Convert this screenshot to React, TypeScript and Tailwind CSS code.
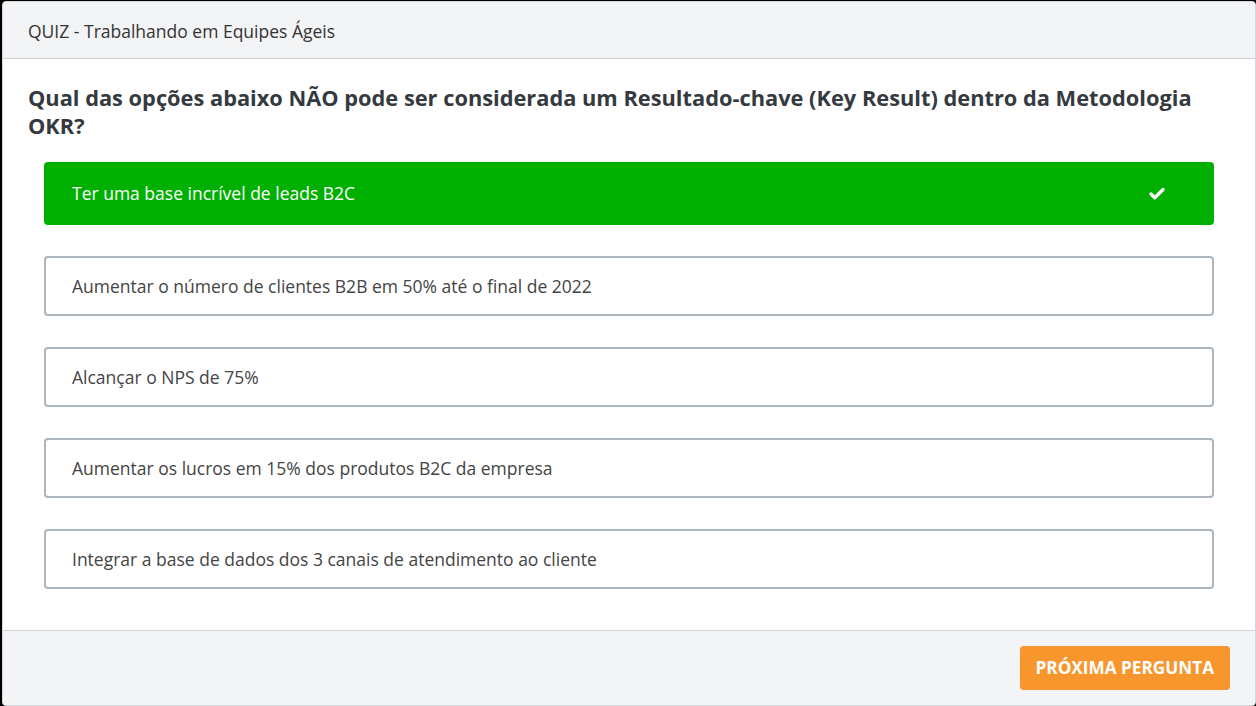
import { Check } from "lucide-react";

const options = [
  { id: 1, text: "Ter uma base incrível de leads B2C", correct: true },
  { id: 2, text: "Aumentar o número de clientes B2B em 50% até o final de 2022", correct: false },
  { id: 3, text: "Alcançar o NPS de 75%", correct: false },
  { id: 4, text: "Aumentar os lucros em 15% dos produtos B2C da empresa", correct: false },
  { id: 5, text: "Integrar a base de dados dos 3 canais de atendimento ao cliente", correct: false },
];

export default function App() {
  return (
    <div className="h-[706px] w-[1256px] bg-black pl-[2px] pt-px" style={{ fontFamily: '"Open Sans", sans-serif' }}>
      <div className="flex h-[705px] flex-col overflow-hidden rounded-[4px] border border-[#d4d7db] bg-white">
        {/* Header */}
        <div className="flex h-[57px] shrink-0 items-center border-b border-[#cfd3d8] bg-[#f3f4f6] px-[25px] pt-[2px]">
          <span className="text-[17.5px] text-[#333]">QUIZ - Trabalhando em Equipes Ágeis</span>
        </div>

        {/* Body */}
        <div className="flex-1 px-[25px] pt-[25px]">
          <h1 className="text-[21.8px] font-bold leading-[28px] text-[#343a40]">
            Qual das opções abaixo NÃO pode ser considerada um Resultado-chave (Key Result) dentro da Metodologia OKR?
          </h1>
          <div className="mt-[22px] flex flex-col gap-[31px] px-[16px]">
            {options.map((o) =>
              o.correct ? (
                <div
                  key={o.id}
                  className="flex h-[63px] items-center justify-between rounded-[4px] bg-[#00b000] pl-[28px] pr-[48px] text-[17.5px] text-white"
                >
                  <span>{o.text}</span>
                  <Check className="h-[18px] w-[18px]" strokeWidth={4.5} />
                </div>
              ) : (
                <div
                  key={o.id}
                  className="flex h-[60px] items-center rounded-[4px] border-2 border-[#adb5bd] pl-[26px] text-[17.5px] text-[#444]"
                >
                  {o.text}
                </div>
              )
            )}
          </div>
        </div>

        {/* Footer */}
        <div className="flex h-[75px] shrink-0 items-center justify-end border-t border-[#cfd3d8] bg-[#f3f4f6] pr-[25px]">
          <button className="h-[44px] rounded-[4px] bg-[#f8962e] px-[16px] text-[17.2px] font-bold uppercase text-white">
            Próxima pergunta
          </button>
        </div>
      </div>
    </div>
  );
}
